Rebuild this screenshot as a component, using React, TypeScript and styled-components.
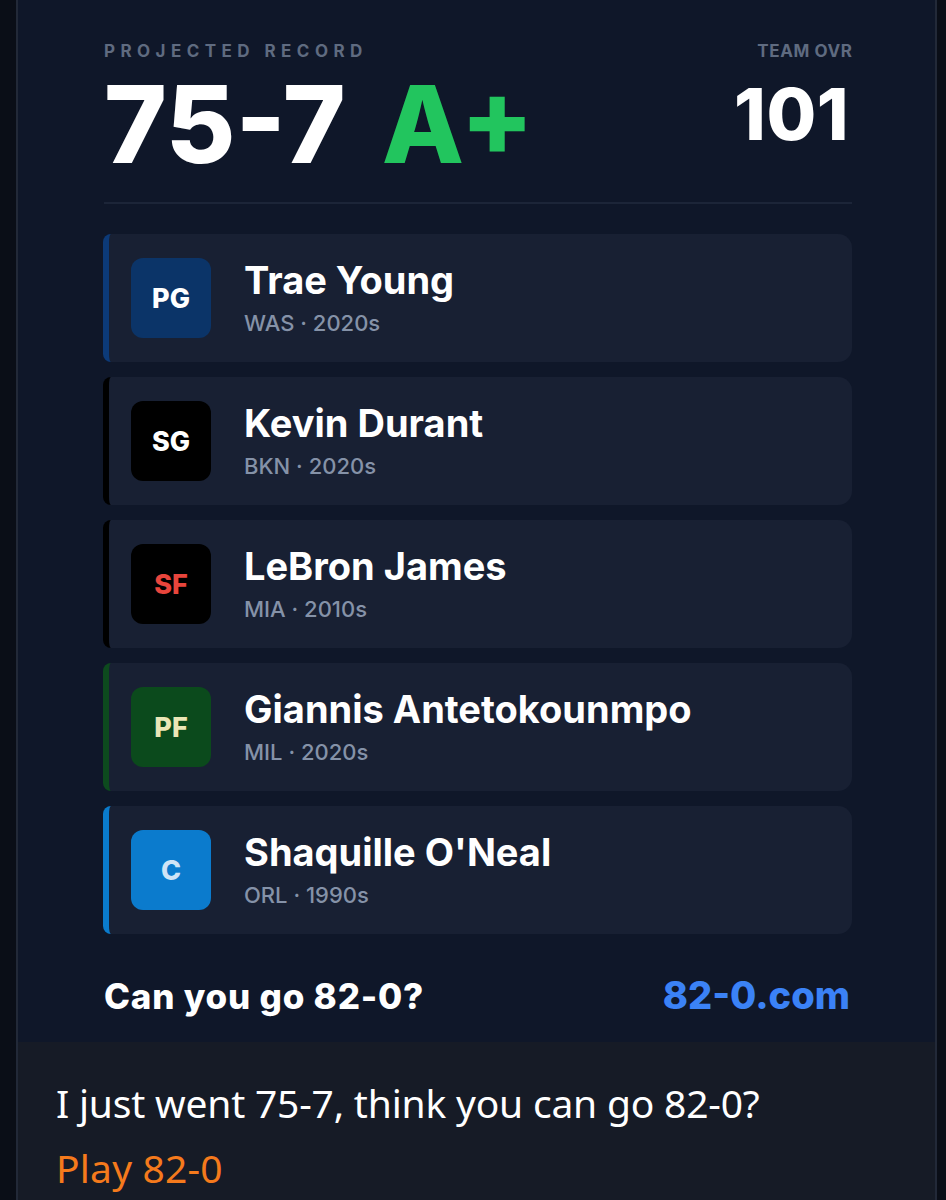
import React from "react";
import styled, { createGlobalStyle } from "styled-components";

type Player = {
  id: number;
  pos: string;
  name: string;
  team: string;
  era: string;
  accent: string;
  badgeBg: string;
  badgeText: string;
};

const players: Player[] = [
  { id: 1, pos: "PG", name: "Trae Young", team: "WAS", era: "2020s", accent: "#0c3a78", badgeBg: "#0b3468", badgeText: "#ffffff" },
  { id: 2, pos: "SG", name: "Kevin Durant", team: "BKN", era: "2020s", accent: "#000000", badgeBg: "#000000", badgeText: "#ffffff" },
  { id: 3, pos: "SF", name: "LeBron James", team: "MIA", era: "2010s", accent: "#000000", badgeBg: "#000000", badgeText: "#e8453c" },
  { id: 4, pos: "PF", name: "Giannis Antetokounmpo", team: "MIL", era: "2020s", accent: "#0d4a1e", badgeBg: "#0b4a1c", badgeText: "#ebe6b6" },
  { id: 5, pos: "C", name: "Shaquille O'Neal", team: "ORL", era: "1990s", accent: "#0a7bcc", badgeBg: "#0b7bcd", badgeText: "#cfe4f6" },
];

const GlobalStyle = createGlobalStyle`
  html, body {
    margin: 0;
    padding: 0;
    background: #0a0e17;
  }
  body {
    font-family: Inter, "Noto Sans", sans-serif;
    -webkit-font-smoothing: antialiased;
  }
`;

const Frame = styled.div`
  margin-left: 16px;
  width: 921px;
  box-sizing: border-box;
  border-left: 2px solid #222938;
  border-right: 2px solid #222938;
  min-height: 1200px;
  background: #161b26;
  display: flex;
  flex-direction: column;
`;

const Card = styled.section`
  background: #0f1729;
  padding: 41px 83px 25px 86px;
`;

const Header = styled.header`
  display: flex;
  justify-content: space-between;
  align-items: flex-start;
  padding-bottom: 25px;
  border-bottom: 2px solid #1c2538;
`;

const Stat = styled.div<{ $align?: "left" | "right" }>`
  display: flex;
  flex-direction: column;
  align-items: ${(p) => (p.$align === "right" ? "flex-end" : "flex-start")};
`;

const Label = styled.div<{ $spaced?: boolean }>`
  font-size: 17px;
  line-height: 20px;
  font-weight: 700;
  color: #5f6b80;
  letter-spacing: ${(p) => (p.$spaced ? "0.32em" : "0.6px")};
  margin-right: ${(p) => (p.$spaced ? "0" : "-0.6px")};
`;

const Record = styled.div`
  margin-top: 11px;
  font-size: 107px;
  line-height: 105px;
  font-weight: 800;
  color: #ffffff;
  white-space: nowrap;
`;

const Grade = styled.span`
  color: #22c55e;
  margin-left: 36px;
`;

const Ovr = styled.div`
  margin-top: 18px;
  margin-right: 3px;
  font-size: 72px;
  line-height: 70px;
  font-weight: 800;
  color: #ffffff;
  letter-spacing: 0.5px;
`;

const Roster = styled.div`
  margin-top: 30px;
  display: flex;
  flex-direction: column;
  gap: 15px;
`;

const Row = styled.div<{ $accent: string }>`
  height: 128px;
  box-sizing: border-box;
  display: flex;
  align-items: center;
  gap: 33px;
  padding-left: 22px;
  margin-left: -1px;
  background: #182033;
  border-left: 6px solid ${(p) => p.$accent};
  border-radius: 8px 14px 14px 8px;
`;

const Badge = styled.div<{ $bg: string; $fg: string }>`
  width: 80px;
  height: 80px;
  flex-shrink: 0;
  border-radius: 12px;
  background: ${(p) => p.$bg};
  color: ${(p) => p.$fg};
  display: flex;
  align-items: center;
  justify-content: center;
  font-size: 27px;
  font-weight: 800;
`;

const Info = styled.div`
  display: flex;
  flex-direction: column;
  padding-bottom: 2px;
`;

const Name = styled.div`
  font-size: 38px;
  line-height: 44px;
  font-weight: 700;
  color: #ffffff;
`;

const Meta = styled.div`
  margin-top: 8px;
  font-size: 22px;
  line-height: 26px;
  font-weight: 500;
  color: #8592a8;
`;

const Footer = styled.footer`
  margin-top: 40px;
  display: flex;
  justify-content: space-between;
  align-items: baseline;
  line-height: 42px;
  font-weight: 800;
  color: #ffffff;
`;

const Tagline = styled.span`
  font-size: 35px;
  letter-spacing: 0.8px;
`;

const Site = styled.span`
  font-size: 38px;
  color: #3b82f6;
  margin-right: 2px;
`;

const Post = styled.div`
  padding: 36px 0 0 38px;
  font-family: "Noto Sans", "Open Sans", sans-serif;
  font-size: 39px;
  color: #ffffff;
`;

const PostText = styled.div`
  line-height: 50px;
  letter-spacing: -0.2px;
`;

const PostLink = styled.div`
  margin-top: 15px;
  line-height: 50px;
  color: #f57a1c;
  letter-spacing: 0.2px;
`;

export default function App() {
  return (
    <>
      <GlobalStyle />
      <Frame>
        <Card>
          <Header>
            <Stat>
              <Label $spaced>PROJECTED RECORD</Label>
              <Record>
                75-7<Grade>A+</Grade>
              </Record>
            </Stat>
            <Stat $align="right">
              <Label>TEAM OVR</Label>
              <Ovr>101</Ovr>
            </Stat>
          </Header>
          <Roster>
            {players.map((p) => (
              <Row key={p.id} $accent={p.accent}>
                <Badge $bg={p.badgeBg} $fg={p.badgeText}>
                  {p.pos}
                </Badge>
                <Info>
                  <Name>{p.name}</Name>
                  <Meta>
                    {p.team} · {p.era}
                  </Meta>
                </Info>
              </Row>
            ))}
          </Roster>
          <Footer>
            <Tagline>Can you go 82-0?</Tagline>
            <Site>82-0.com</Site>
          </Footer>
        </Card>
        <Post>
          <PostText>I just went 75-7, think you can go 82-0?</PostText>
          <PostLink>Play 82-0</PostLink>
        </Post>
      </Frame>
    </>
  );
}
